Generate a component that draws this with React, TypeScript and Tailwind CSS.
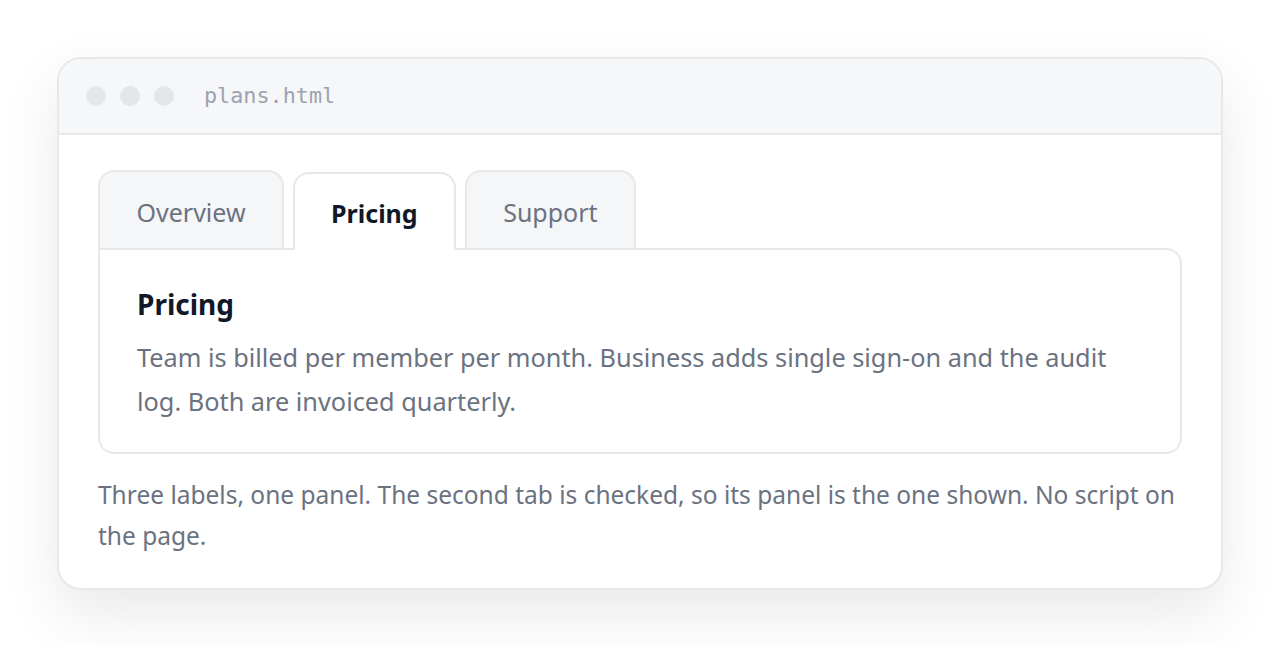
import React from "react"

const tabs = ["Overview", "Pricing", "Support"]

export default function App() {
    const active = 1

    return (
        <div className="min-h-screen w-full bg-white px-[57px] pt-[57px] pb-[57px] font-['Noto_Sans',sans-serif]">
            <div className="w-[1166px] rounded-[24px] border-2 border-[#e7e8ea] bg-white shadow-[0_24px_60px_rgba(0,0,0,0.09)] overflow-hidden">
                {/* title bar */}
                <div className="flex h-[76px] items-center gap-[14px] border-b-2 border-[#e7e8ea] bg-[#f6f7f9] pl-[27px]">
                    <span className="h-5 w-5 rounded-full bg-[#e4e6e9]" />
                    <span className="h-5 w-5 rounded-full bg-[#e4e6e9]" />
                    <span className="h-5 w-5 rounded-full bg-[#e4e6e9]" />
                    <span className="ml-4 font-['DejaVu_Sans_Mono',monospace] text-[21.8px] text-[#9ca3af]">plans.html</span>
                </div>

                {/* body */}
                <div className="px-[39px] pt-[35px] pb-[32px]">
                    <div className="flex items-end gap-[9px]">
                        {tabs.map((t, i) =>
                            i === active ? (
                                <div
                                    key={t}
                                    className="relative z-10 -mb-[2px] flex h-[78px] items-center rounded-t-[16px] border-2 border-b-0 border-[#e7e8ea] bg-white px-[36px] pt-[4px] text-[25px] font-bold text-[#111827]"
                                >
                                    {t}
                                </div>
                            ) : (
                                <div
                                    key={t}
                                    className="flex h-[78px] items-center rounded-t-[16px] border-2 border-b-0 border-[#e7e8ea] bg-[#f5f6f8] px-[36.5px] pt-[5px] text-[25px] text-[#6b7280]"
                                >
                                    {t}
                                </div>
                            )
                        )}
                    </div>

                    <div className="rounded-[16px] rounded-tl-none border-2 border-[#e7e8ea] bg-white px-[37px] pt-[34px] pb-[29px]">
                        <h2 className="text-[28px] font-bold leading-[40px] text-[#111827]">Pricing</h2>
                        <p className="mt-[11px] text-[25.3px] leading-[44px] text-[#6b7280]">
                            Team is billed per member per month. Business adds single sign-on and the audit log. Both are invoiced quarterly.
                        </p>
                    </div>

                    <p className="mt-[20px] text-[24.5px] leading-[41px] text-[#6b7280]">
                        Three labels, one panel. The second tab is checked, so its panel is the one shown. No script on the page.
                    </p>
                </div>
            </div>
        </div>
    )
}
